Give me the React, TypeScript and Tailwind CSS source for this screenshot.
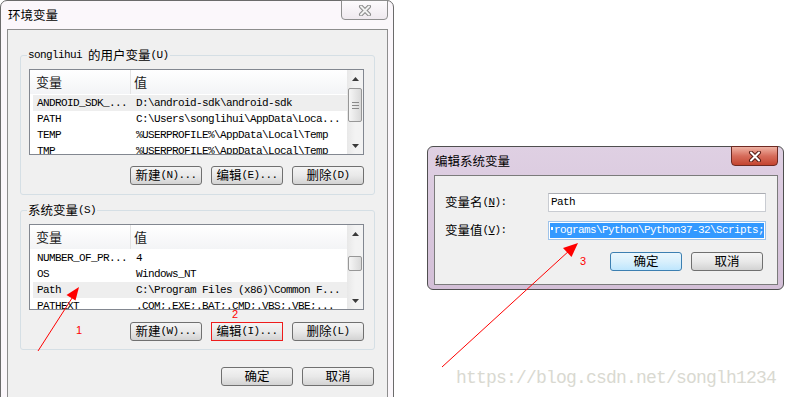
import React from "react";

const MONO = "font-['Liberation_Mono',monospace] text-[11px] tracking-[-0.6px]";
const CJK = "font-['Noto_Sans_CJK_SC','Noto_Sans',sans-serif]";

function Btn({
  label,
  mn = "",
  className = "border-[#707070] from-[#f4f4f4] via-[#e9e9e9] to-[#d3d3d3]",
}: {
  label: string;
  mn?: string;
  className?: string;
}) {
  return (
    <div
      className={`h-[19px] w-[72px] shrink-0 flex items-center justify-center rounded-[3px] border bg-linear-to-b text-black leading-none ${className}`}
    >
      <span className={`${CJK} text-[12.5px]`}>{label}</span>
      {mn && <span className={MONO}>{mn}</span>}
    </div>
  );
}

function Scrollbar({ thumbClass, grip }: { thumbClass: string; grip: boolean }) {
  return (
    <div className="w-[16px] h-full shrink-0 flex flex-col bg-linear-to-r from-[#e8e8e8] via-[#f3f3f3] to-[#f3f3f3]">
      <div className="h-[17px] shrink-0 flex items-center justify-center">
        <svg width="7" height="4">
          <polygon points="0,4 3.5,0 7,4" fill="#3a3a3a" />
        </svg>
      </div>
      <div
        className={`mx-[1px] shrink-0 rounded-[2px] border border-[#979797] bg-linear-to-r from-[#f6f6f6] to-[#d9d9d9] flex items-center justify-center ${thumbClass}`}
      >
        {grip && (
          <svg width="7" height="7">
            <line x1="0" y1="0.5" x2="7" y2="0.5" stroke="#8a8a8a" />
            <line x1="0" y1="3.5" x2="7" y2="3.5" stroke="#8a8a8a" />
            <line x1="0" y1="6.5" x2="7" y2="6.5" stroke="#8a8a8a" />
          </svg>
        )}
      </div>
      <div className="flex-1" />
      <div className="h-[17px] shrink-0 flex items-center justify-center">
        <svg width="7" height="4">
          <polygon points="0,0 3.5,4 7,0" fill="#3a3a3a" />
        </svg>
      </div>
    </div>
  );
}

function ListView({
  rows,
  hi,
  thumbClass,
  grip,
}: {
  rows: [string, string][];
  hi: number;
  thumbClass: string;
  grip: boolean;
}) {
  return (
    <div className="w-[335px] h-[86px] border border-[#828790] bg-white flex overflow-hidden">
      <div className="flex-1 min-w-0 flex flex-col overflow-hidden">
        <div className="h-[24px] shrink-0 flex bg-linear-to-b from-white to-[#f3f4f6]">
          <div
            className={`w-[101px] pl-[6px] flex items-center border-r border-[#e3e3e3] ${CJK} text-[13px] text-[#1a1a1a]`}
          >
            变量
          </div>
          <div className={`flex-1 pl-[3px] flex items-center ${CJK} text-[13px] text-[#1a1a1a]`}>值</div>
        </div>
        {rows.map(([a, b], i) => (
          <div
            key={i}
            className={`h-[16px] shrink-0 flex items-center ml-[3px] text-black ${MONO} ${
              i === 0 ? "mt-[1px]" : ""
            } ${i === hi ? "bg-[#eeeeee]" : ""}`}
          >
            <div className="w-[97px] pl-[4px] whitespace-nowrap overflow-hidden">{a}</div>
            <div className="flex-1 pl-[6px] whitespace-nowrap overflow-hidden">{b}</div>
          </div>
        ))}
      </div>
      <Scrollbar thumbClass={thumbClass} grip={grip} />
    </div>
  );
}

function XGlyph({ outer, inner }: { outer: string; inner: string }) {
  return (
    <svg width="14" height="11" viewBox="0 0 14 11">
      <path d="M3 1.5 L11 9.5 M11 1.5 L3 9.5" stroke={outer} strokeWidth="4" strokeLinecap="round" />
      <path d="M3 1.5 L11 9.5 M11 1.5 L3 9.5" stroke={inner} strokeWidth="2" strokeLinecap="round" />
    </svg>
  );
}

export default function App() {
  const userRows: [string, string][] = [
    ["ANDROID_SDK_...", "D:\\android-sdk\\android-sdk"],
    ["PATH", "C:\\Users\\songlihui\\AppData\\Loca..."],
    ["TEMP", "%USERPROFILE%\\AppData\\Local\\Temp"],
    ["TMP", "%USERPROFILE%\\AppData\\Local\\Temp"],
  ];
  const sysRows: [string, string][] = [
    ["NUMBER_OF_PR...", "4"],
    ["OS", "Windows_NT"],
    ["Path", "C:\\Program Files (x86)\\Common F..."],
    ["PATHEXT", ".COM;.EXE;.BAT;.CMD;.VBS;.VBE;..."],
  ];

  return (
    <div className="relative w-[788px] h-[397px] overflow-hidden bg-white">
      {/* Main window: 环境变量 */}
      <div className="absolute left-0 top-0 w-[394px] h-[440px] rounded-t-[7px] border border-[#6b6b6b] bg-[#fbf7fb] flex flex-col">
        <div className="relative h-[28px] shrink-0 flex items-center pl-[7px]">
          <span className={`${CJK} text-[12.5px] text-black`}>环境变量</span>
          <div className="absolute right-[5px] top-[-1px] w-[47px] h-[20px] rounded-b-[4px] border border-[#8e8e8e] bg-linear-to-b from-[#fdfbfd] to-[#efe9ef] flex items-center justify-center">
            <XGlyph outer="#8a8a8a" inner="#f2f2f2" />
          </div>
        </div>
        <div className="ml-[6px] mr-[5px] flex-1 border border-[#8d8d8d] bg-[#f0f0f0] flex flex-col pl-[12px]">
          {/* user group */}
          <div className="relative mt-[25px] w-[355px] h-[140px] shrink-0 border border-[#d5dfe5] rounded-[3px] pt-[13px] pl-[8px]">
            <div className="absolute -top-[8px] left-[6px] px-[1px] bg-[#f0f0f0] flex items-center h-[14px] leading-none text-black">
              <span className={MONO}>songlihui&nbsp;</span>
              <span className={`${CJK} text-[12.5px]`}>的用户变量</span>
              <span className={MONO}>(U)</span>
            </div>
            <ListView rows={userRows} hi={0} thumbClass="mt-[1px] h-[34px]" grip={true} />
            <div className="w-[335px] mt-[11px] flex justify-end gap-[9px]">
              <Btn label="新建" mn="(N)..." />
              <Btn label="编辑" mn="(E)..." />
              <Btn label="删除" mn="(D)" />
            </div>
          </div>
          {/* system group */}
          <div className="relative mt-[15px] w-[355px] h-[140px] shrink-0 border border-[#d5dfe5] rounded-[3px] pt-[13px] pl-[8px]">
            <div className="absolute -top-[8px] left-[6px] px-[1px] bg-[#f0f0f0] flex items-center h-[14px] leading-none text-black">
              <span className={`${CJK} text-[12.5px]`}>系统变量</span>
              <span className={MONO}>(S)</span>
            </div>
            <ListView rows={sysRows} hi={2} thumbClass="mt-[14px] h-[15px]" grip={false} />
            <div className="w-[335px] mt-[12px] flex justify-end gap-[9px]">
              <Btn label="新建" mn="(W)..." />
              <Btn
                label="编辑"
                mn="(I)..."
                className="border-[#ee1c1c] rounded-none from-[#f4f4f4] via-[#e9e9e9] to-[#d3d3d3]"
              />
              <Btn label="删除" mn="(L)" />
            </div>
          </div>
          <div className="w-[354px] mt-[17px] flex justify-end gap-[9px]">
            <Btn label="确定" />
            <Btn label="取消" />
          </div>
        </div>
      </div>

      {/* Dialog: 编辑系统变量 */}
      <div className="absolute left-[427px] top-[146px] w-[357px] h-[144px] rounded-[6px] border border-[#4f4f4f] bg-linear-to-b from-[#dfd0e3] to-[#d3bfd7] flex flex-col">
        <div className="relative h-[28px] shrink-0 flex items-center pl-[7px]">
          <span className={`${CJK} text-[12.5px] text-black`}>编辑系统变量</span>
          <div className="absolute right-[5px] top-[-1px] w-[47px] h-[20px] rounded-b-[4px] border border-[#6e2a22] bg-linear-to-b from-[#eeb2a4] via-[#d66c5b] to-[#c4432f] flex items-center justify-center">
            <XGlyph outer="#5a1d16" inner="#ffffff" />
          </div>
        </div>
        <div className="ml-[6px] mr-[5px] mb-[4px] flex-1 border border-[#7b7b7b] bg-[#f0f0f0] flex flex-col pl-[10px] pt-[17px]">
          <div className="grid grid-cols-[103px_218px] gap-y-[9px]">
            <div className="flex items-center text-black leading-none">
              <span className={`${CJK} text-[12.5px]`}>变量名</span>
              <span className={MONO}>(<span className="underline">N</span>):</span>
            </div>
            <div className="h-[19px] border border-[#c9ccd2] border-t-[#abadb3] bg-white flex items-center pl-[2px]">
              <span className={`${MONO} text-black`}>Path</span>
            </div>
            <div className="flex items-center text-black leading-none">
              <span className={`${CJK} text-[12.5px]`}>变量值</span>
              <span className={MONO}>(<span className="underline">V</span>):</span>
            </div>
            <div className="h-[19px] border border-[#9ec3ea] bg-white p-[1px] flex">
              <div className="flex-1 bg-[#3399ff] flex items-center pl-[1px]">
                <span className="w-[2px] h-[3px] mr-[1px] mb-[5px] bg-white" />
                <span className={`${MONO} text-white whitespace-nowrap`}>rograms\Python\Python37-32\Scripts;</span>
              </div>
            </div>
          </div>
          <div className="w-[318px] mt-[12px] flex justify-end gap-[9px]">
            <Btn label="确定" className="border-[#3c7fb1] from-[#eaf6fd] via-[#d9f0fc] to-[#bee6fd]" />
            <Btn label="取消" />
          </div>
        </div>
      </div>

      {/* annotations */}
      <svg className="absolute inset-0 pointer-events-none" width="788" height="397">
        <line x1="38" y1="351" x2="74" y2="295" stroke="#ff0000" strokeWidth="1" />
        <polygon points="79,287 66.5,295 75.5,300.5" fill="#ff0000" />
        <line x1="442" y1="367" x2="570" y2="250" stroke="#ff0000" strokeWidth="1" />
        <polygon points="578,243 563,248 571.5,257" fill="#ff0000" />
      </svg>
      <span className="absolute left-[76px] top-[325px] font-['Liberation_Sans',sans-serif] text-[11px] leading-none text-[#ff0000]">
        1
      </span>
      <span className="absolute left-[232px] top-[309px] font-['Liberation_Sans',sans-serif] text-[11px] leading-none text-[#ff0000]">
        2
      </span>
      <span className="absolute left-[580px] top-[256px] font-['Liberation_Sans',sans-serif] text-[11px] leading-none text-[#ff0000]">
        3
      </span>
      <span className="absolute left-[456px] top-[369px] font-['Liberation_Mono',monospace] text-[18px] tracking-[-0.8px] leading-none text-[#d9d9d1] whitespace-nowrap">
        https://blog.csdn.net/songlh1234
      </span>
    </div>
  );
}
